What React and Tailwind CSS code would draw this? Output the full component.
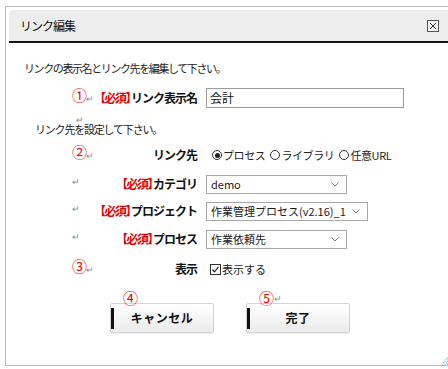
import React from "react";

const font = { fontFamily: '"Noto Sans CJK JP", "Noto Sans", sans-serif' };

function Circled({ children }) {
  return (
    <span className="text-[15px] leading-none text-[#f00000] -mt-[7px]">{children}</span>
  );
}

function Ret({ className = "" }) {
  return <span className={"text-[9px] leading-none text-[#8a8a8a] " + className}>↵</span>;
}

function Required() {
  return (
    <span className="text-[#e00000] font-bold tracking-[-1.5px]">
      【必須<span className="tracking-[-6.5px]">】</span>
    </span>
  );
}

function Row({ marker, children, field, top }) {
  return (
    <div className={"flex items-center h-[20px] " + top}>
      <div className="w-[188px] pl-[63px] flex items-center justify-between">
        <div className="flex items-center">{marker}</div>
        <div className="text-[12px] font-bold tracking-[-1px] text-[#111] flex items-center whitespace-nowrap">
          {children}
        </div>
      </div>
      <div className="ml-[9px] flex items-center">{field}</div>
    </div>
  );
}

function Select({ width, value }) {
  return (
    <div
      className={
        "h-[19px] border border-[#a6a6a6] bg-white flex items-center justify-between pl-[4px] pr-[7px] text-[11px] text-[#1a1a1a] whitespace-nowrap " +
        width
      }
    >
      <span>{value}</span>
      <svg width="8" height="5" viewBox="0 0 8 5">
        <polyline points="0.5,0.5 4,4 7.5,0.5" fill="none" stroke="#777" strokeWidth="1" />
      </svg>
    </div>
  );
}

function Radio({ checked, label }) {
  return (
    <span className="flex items-center">
      <span className="w-[10px] h-[10px] rounded-full border border-[#333] bg-white flex items-center justify-center">
        {checked && <span className="w-[5px] h-[5px] rounded-full bg-[#222]" />}
      </span>
      <span className="ml-[1px] tracking-[-0.4px]">{label}</span>
    </span>
  );
}

function Button({ label, num, ret }) {
  return (
    <div className="relative w-[104px] h-[30px] rounded-[2px] border border-[#d4d4d4] bg-gradient-to-b from-white to-[#ebebeb] shadow-[0_1px_1px_rgba(0,0,0,0.08)] flex items-center justify-center">
      <span className="absolute left-0 top-[4px] w-[3px] h-[21px] bg-[#111]" />
      <span className="text-[12px] font-bold text-[#111] tracking-[0.5px]">{label}</span>
      <span className="absolute left-[12px] -top-[14px] flex items-center">
        <span className="text-[15px] leading-none text-[#f00000]">{num}</span>
        {ret && <Ret className="mt-[2px]" />}
      </span>
    </div>
  );
}

export default function App() {
  return (
    <div className="w-[448px] h-[369px] bg-white overflow-hidden pt-[6px] pl-[5px]" style={font}>
      <div className="relative h-[360px] border-t border-l border-b border-[#b9b9b9] pt-[3px] pl-[3px] flex flex-col">
        {/* Title bar */}
        <div className="h-[33px] bg-[#ededed] rounded-tl-[5px] border-b-2 border-[#151515] flex items-center justify-between pl-[11px] pr-[9px]">
          <span className="text-[12px] tracking-[-1px] text-[#111]">リンク編集</span>
          <span className="w-[12px] h-[12px] border border-[#555] bg-[#f4f4f4] flex items-center justify-center">
            <svg width="8" height="8" viewBox="0 0 8 8">
              <path d="M1 1L7 7M7 1L1 7" stroke="#333" strokeWidth="1" />
            </svg>
          </span>
        </div>

        {/* Body */}
        <div className="flex flex-col text-[11px] text-[#222]">
          <div className="mt-[17px] pl-[15px] h-[16px] leading-[16px] tracking-[-1.4px]">
            リンクの表示名とリンク先を編集して下さい。
          </div>

          <Row
            top="mt-[12px]"
            marker={
              <>
                <Circled>①</Circled>
                <Ret className="-ml-[1px]" />
              </>
            }
            field={
              <div className="w-[198px] h-[20px] border border-[#9a9a9a] bg-white pl-[3px] text-[12px] leading-[18px] text-[#111]">
                会計
              </div>
            }
          >
            <Required />
            <span>リンク表示名</span>
          </Row>

          <div className="relative mt-[13px] pl-[26px] h-[16px] leading-[16px] tracking-[-1.2px]">
            リンク先を設定して下さい。
            <Ret className="absolute left-[67px] -top-[6px]" />
          </div>

          <Row
            top="mt-[8px]"
            marker={
              <>
                <Circled>②</Circled>
                <Ret className="-ml-[1px]" />
              </>
            }
            field={
              <div className="flex items-center gap-[5px] pl-[6px] text-[11px] text-[#222]">
                <Radio checked label="プロセス" />
                <Radio label="ライブラリ" />
                <Radio label="任意URL" />
              </div>
            }
          >
            <span>リンク先</span>
          </Row>

          <Row
            top="mt-[9px]"
            marker={<Ret className="-mt-[6px]" />}
            field={<Select width="w-[141px]" value="demo" />}
          >
            <Required />
            <span>カテゴリ</span>
          </Row>

          <Row
            top="mt-[7px]"
            marker={<Ret className="-mt-[6px]" />}
            field={<Select width="w-[162px]" value="作業管理プロセス(v2.16)_1" />}
          >
            <Required />
            <span>プロジェクト</span>
          </Row>

          <Row
            top="mt-[8px]"
            marker={<Ret className="-mt-[6px]" />}
            field={<Select width="w-[141px]" value="作業依頼先" />}
          >
            <Required />
            <span>プロセス</span>
          </Row>

          <Row
            top="mt-[10px]"
            marker={
              <>
                <Circled>③</Circled>
                <Ret className="-ml-[1px]" />
              </>
            }
            field={
              <div className="flex items-center pl-[4px] text-[11px] text-[#222]">
                <svg width="11" height="11" viewBox="0 0 11 11">
                  <rect x="0.5" y="0.5" width="10" height="10" fill="#fff" stroke="#333" />
                  <polyline points="2.5,5.5 4.5,7.8 8.5,2.8" fill="none" stroke="#222" strokeWidth="1.2" />
                </svg>
                <span className="ml-[1px]">表示する</span>
              </div>
            }
          >
            <span>表示</span>
          </Row>

          <div className="mt-[24px] ml-[101px] flex gap-[32px]">
            <Button label="キャンセル" num="④" />
            <Button label="完了" num="⑤" ret />
          </div>
        </div>

        {/* Resize grip */}
        <svg className="absolute right-0 bottom-0" width="9" height="9" viewBox="0 0 9 9">
          <path d="M9 2L2 9M9 5L5 9M9 8L8 9" stroke="#5aaee8" strokeWidth="1.2" strokeDasharray="1 1" />
        </svg>
      </div>
    </div>
  );
}
